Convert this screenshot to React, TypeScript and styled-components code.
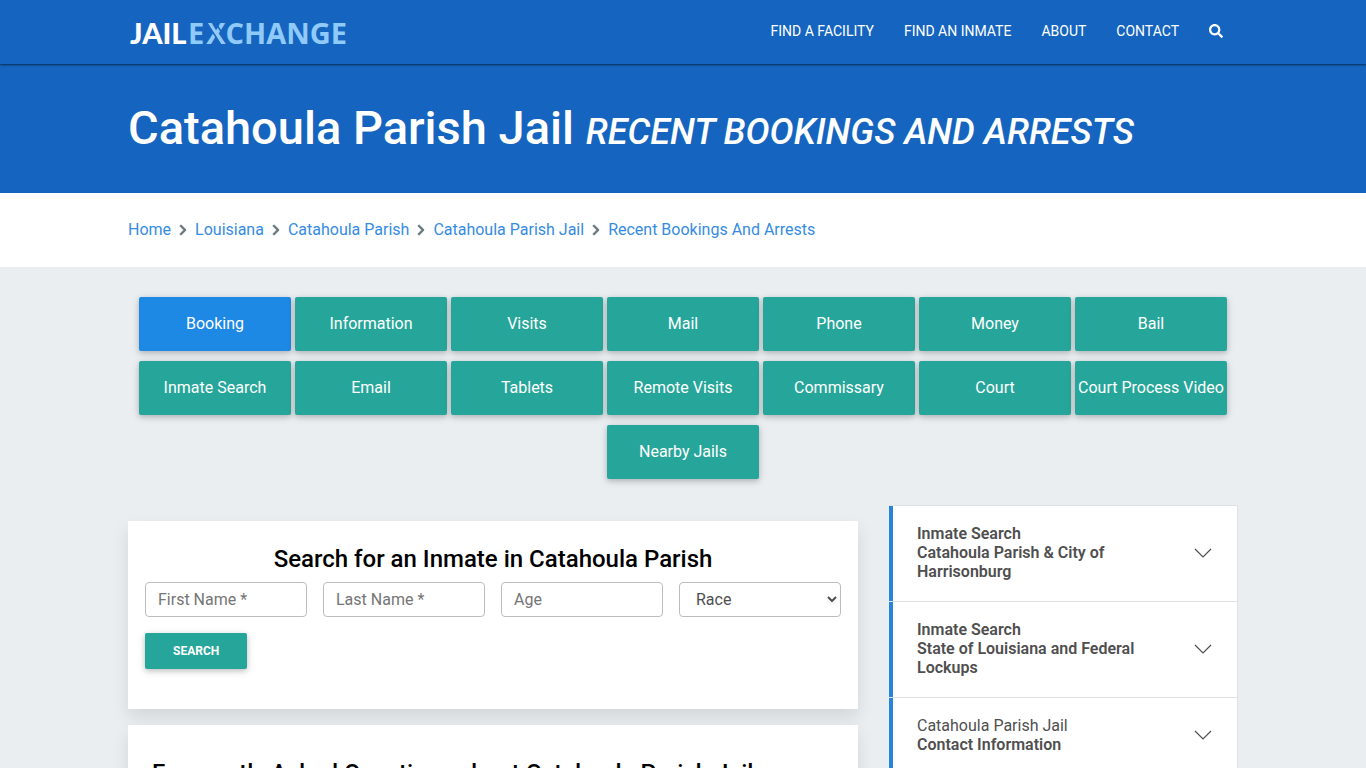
import React, { useState } from "react";
import styled, { createGlobalStyle } from "styled-components";
import { FaSearch, FaChevronRight } from "react-icons/fa";

const GlobalStyle = createGlobalStyle`
  *, *::before, *::after { box-sizing: border-box; }
  body {
    margin: 0;
    background: #eaeef1;
    color: #4f4f4f;
    font-family: Roboto, "Liberation Sans", sans-serif;
    font-size: 16px;
    font-weight: 400;
    line-height: 24px;
  }
  a { text-decoration: none; }
`;

const Container = styled.div`
  width: 100%;
  max-width: 1140px;
  margin: 0 auto;
  padding: 0 15px;
`;

const Header = styled.header`
  position: relative;
  z-index: 1;
  background: #1565c0;
  box-shadow: 0 1px 2px rgba(0, 0, 0, 0.6);
`;

const HeaderRow = styled(Container)`
  display: flex;
  align-items: center;
  justify-content: space-between;
  height: 64px;
`;

const Logo = styled.a`
  display: block;
  font-family: "Open Sans", "Noto Sans", sans-serif;
  font-size: 29px;
  font-weight: 700;

  svg { display: block; }
`;

const LogoLead = styled.text`
  fill: #fff;
  font-family: Lato, "Open Sans", sans-serif;
  font-weight: 900;
`;

const Nav = styled.nav`
  display: flex;
  align-items: center;
  gap: 30px;
  padding: 0 15px 2px 0;
`;

const NavLink = styled.a`
  display: flex;
  color: #fff;
  font-size: 14px;
  font-weight: 400;
  line-height: 20px;
  text-transform: uppercase;
`;

const Hero = styled.section`
  background: #1565c0;
  padding: 36px 0 37px;
`;

const Title = styled.h1`
  margin: 0;
  color: #fff;
  font-size: 47px;
  font-weight: 500;
  line-height: 56px;
`;

const Subtitle = styled.em`
  font-size: 36px;
  font-weight: 500;
  line-height: 36px;
  text-transform: uppercase;
`;

const Crumbs = styled.nav`
  background: #fff;
  padding: 25px 0;
`;

const CrumbList = styled.ol`
  display: flex;
  flex-wrap: wrap;
  margin: 0;
  padding: 0;
  list-style: none;
`;

const Crumb = styled.li`
  display: flex;
  align-items: center;

  a { color: #358ce2; }

  svg {
    margin: 0 6px;
    color: #66757a;
    stroke: #66757a;
    stroke-width: 24px;
  }
`;

const Tabs = styled.nav`
  display: flex;
  flex-wrap: wrap;
  justify-content: center;
  gap: 10px 4px;
  padding: 30px 0 26px;
`;

const Tab = styled.a<{ $active?: boolean }>`
  width: 152px;
  border-radius: 2px;
  background: ${(p) => (p.$active ? "#1e88e5" : "#26a69a")};
  box-shadow: 0 2px 5px rgba(0, 0, 0, 0.16), 0 2px 10px rgba(0, 0, 0, 0.12);
  color: #fff;
  line-height: 54px;
  text-align: center;
  white-space: nowrap;
`;

const Columns = styled.div`
  display: grid;
  grid-template-columns: minmax(0, 730fr) minmax(0, 350fr);
  gap: 30px;
  align-items: start;
`;

const Main = styled.main`
  display: flex;
  flex-direction: column;
  gap: 16px;
  padding-top: 16px;
`;

const Card = styled.section`
  background: #fff;
  box-shadow: 0 8px 16px rgba(0, 0, 0, 0.1);
`;

const SearchCard = styled(Card)`
  padding: 24px 17px 40px;
`;

const SearchTitle = styled.h2`
  margin: 0 0 8px;
  color: #000;
  font-size: 24px;
  font-weight: 500;
  line-height: 29px;
  text-align: center;
`;

const Fields = styled.div`
  display: grid;
  grid-template-columns: repeat(4, minmax(0, 1fr));
  gap: 16px;
  margin-bottom: 16px;
`;

const fieldStyle = `
  width: 100%;
  height: 35px;
  padding: 0 12px;
  border: 1px solid #bdbdbd;
  border-radius: 4px;
  background: #fff;
  color: #4f4f4f;
  font: inherit;
`;

const Input = styled.input`
  ${fieldStyle}
  &::placeholder { color: #757575; }
`;

const Select = styled.select`
  ${fieldStyle}
  padding-right: 0;
`;

const SearchButton = styled.button`
  display: block;
  height: 36px;
  padding: 0 28px;
  border: 0;
  border-radius: 2px;
  background: #26a69a;
  box-shadow: 0 2px 5px rgba(0, 0, 0, 0.16), 0 2px 10px rgba(0, 0, 0, 0.12);
  color: #fff;
  font-family: inherit;
  font-size: 12px;
  font-weight: 700;
  text-transform: uppercase;
`;

const FaqCard = styled(Card)`
  padding: 32px 24px;
`;

const FaqTitle = styled.h2`
  margin: 0;
  color: #000;
  font-size: 24px;
  font-weight: 500;
  line-height: 32px;
`;

const Accordion = styled.aside`
  margin-left: 1px;
  border: 1px solid #dee2e6;
  border-width: 1px 1px 0 0;
`;

const AccordionItem = styled.button`
  display: flex;
  align-items: center;
  justify-content: space-between;
  gap: 32px;
  width: 100%;
  padding: 18px 25px 20px 28px;
  border: 0;
  border-bottom: 1px solid #dee2e6;
  background: #fff;
  box-shadow: inset 4px 0 #2684d9;
  color: #4f4f4f;
  font: inherit;
  line-height: 19px;
  text-align: left;
`;

const ItemLabel = styled.span`
  max-width: 240px;
`;

const ItemLine = styled.span<{ $light?: boolean }>`
  display: block;
  font-weight: ${(p) => (p.$light ? 400 : 600)};
`;

const tabs = [
  "Booking", "Information", "Visits", "Mail", "Phone", "Money", "Bail",
  "Inmate Search", "Email", "Tablets", "Remote Visits", "Commissary", "Court",
  "Court Process Video", "Nearby Jails",
];

const crumbs = ["Home", "Louisiana", "Catahoula Parish", "Catahoula Parish Jail", "Recent Bookings And Arrests"];

const panels = [
  { top: "Inmate Search", bottom: "Catahoula Parish & City of Harrisonburg" },
  { top: "Inmate Search", bottom: "State of Louisiana and Federal Lockups" },
  { top: "Catahoula Parish Jail", bottom: "Contact Information", light: true },
];

export default function App() {
  const [race, setRace] = useState("");
  return (
    <>
      <GlobalStyle />
      <Header>
        <HeaderRow>
          <Logo href="#" aria-label="Jail Exchange">
            <svg width="230" height="48" viewBox="0 0 230 48">
              <LogoLead x="2" y="36">JAIL</LogoLead>
              <text x="60" y="36" dx="0 2" fill="#90caf9">EXCHANGE</text>
              {/* cuts that split the arms of the X from its main stroke */}
              <path d="M87 14 L101 36 M79 15 L93 37" stroke="#1565c0" strokeWidth="1.4" />
            </svg>
          </Logo>
          <Nav>
            <NavLink href="#">Find a Facility</NavLink>
            <NavLink href="#">Find an Inmate</NavLink>
            <NavLink href="#">About</NavLink>
            <NavLink href="#">Contact</NavLink>
            <NavLink href="#" aria-label="Search"><FaSearch size={14} /></NavLink>
          </Nav>
        </HeaderRow>
      </Header>
      <Hero>
        <Container>
          <Title>Catahoula Parish Jail <Subtitle>Recent Bookings and Arrests</Subtitle></Title>
        </Container>
      </Hero>
      <Crumbs aria-label="Breadcrumb">
        <Container>
          <CrumbList>
            {crumbs.map((c, i) => (
              <Crumb key={c}>
                {i > 0 && <FaChevronRight size={12} />}
                <a href="#">{c}</a>
              </Crumb>
            ))}
          </CrumbList>
        </Container>
      </Crumbs>
      <Container>
        <Tabs>
          {tabs.map((t, i) => <Tab key={t} href="#" $active={i === 0}>{t}</Tab>)}
        </Tabs>
        <Columns>
          <Main>
            <SearchCard>
              <SearchTitle>Search for an Inmate in Catahoula Parish</SearchTitle>
              <form onSubmit={(e) => e.preventDefault()}>
                <Fields>
                  <Input aria-label="First Name" placeholder="First Name *" />
                  <Input aria-label="Last Name" placeholder="Last Name *" />
                  <Input aria-label="Age" placeholder="Age" />
                  <Select aria-label="Race" value={race} onChange={(e) => setRace(e.target.value)}>
                    <option value="">Race</option>
                  </Select>
                </Fields>
                <SearchButton type="submit">Search</SearchButton>
              </form>
            </SearchCard>
            <FaqCard>
              <FaqTitle>Frequently Asked Questions about Catahoula Parish Jail</FaqTitle>
            </FaqCard>
          </Main>
          <Accordion>
            {panels.map((p) => (
              <AccordionItem key={p.bottom} type="button">
                <ItemLabel>
                  <ItemLine $light={p.light}>{p.top}</ItemLine>
                  <ItemLine>{p.bottom}</ItemLine>
                </ItemLabel>
                <svg width="18" height="18" viewBox="0 0 18 18" fill="none" stroke="#4f4f4f" strokeWidth="1.2">
                  <path d="M1 5 L9 13 L17 5" />
                </svg>
              </AccordionItem>
            ))}
          </Accordion>
        </Columns>
      </Container>
    </>
  );
}
